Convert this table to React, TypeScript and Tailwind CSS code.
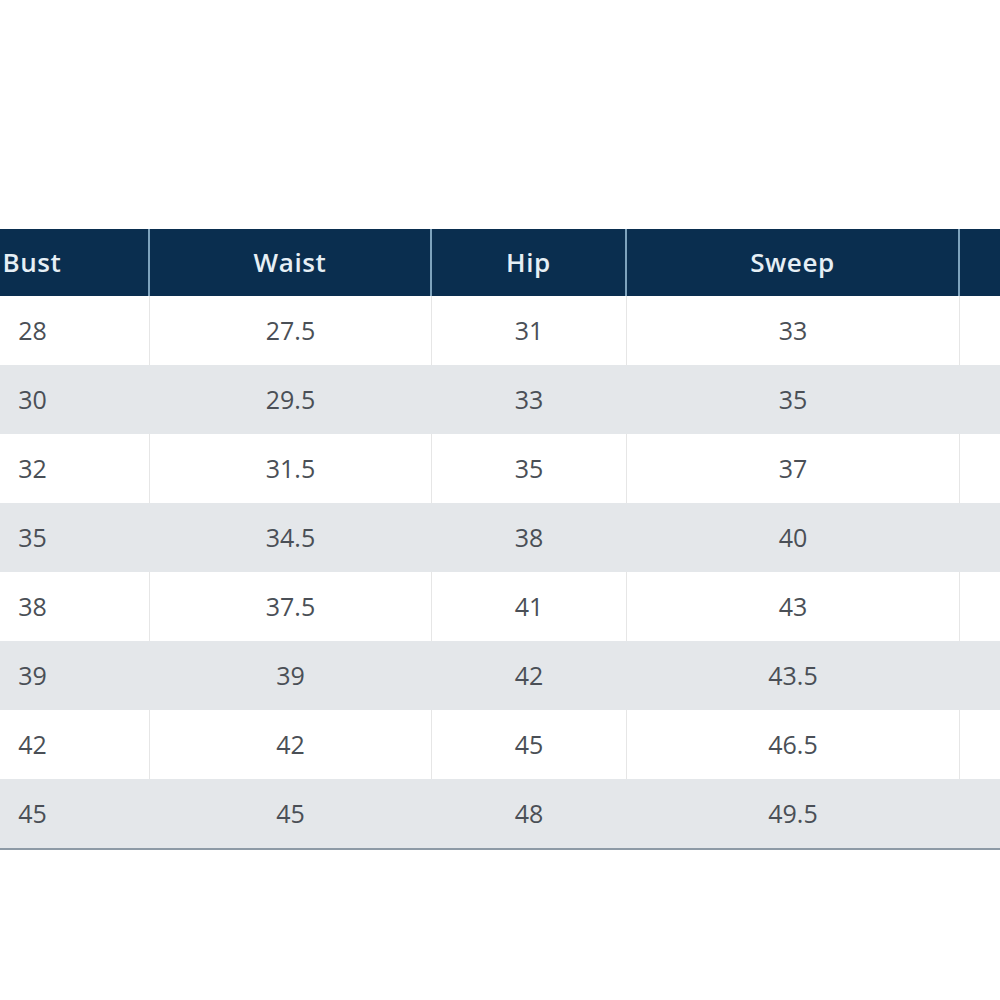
import React from "react";

const rows = [
  ["28", "27.5", "31", "33"],
  ["30", "29.5", "33", "35"],
  ["32", "31.5", "35", "37"],
  ["35", "34.5", "38", "40"],
  ["38", "37.5", "41", "43"],
  ["39", "39", "42", "43.5"],
  ["42", "42", "45", "46.5"],
  ["45", "45", "48", "49.5"],
];

const widths = ["w-[234px]", "w-[282px]", "w-[195px]", "w-[333px]", "w-[200px]"];

export default function App() {
  return (
    <div className="w-[1000px] h-[1000px] bg-white overflow-hidden" style={{ fontFamily: '"Open Sans", "Liberation Sans", sans-serif' }}>
      <div className="pt-[229px] ml-[-84px] w-[1244px]">
        <div className="flex h-[67px] bg-[#0a2e4f]">
          {["Bust", "Waist", "Hip", "Sweep", ""].map((h, i) => (
            <div
              key={i}
              className={`${widths[i]} flex items-center justify-center text-[26px] font-semibold tracking-[0.6px] text-[#e6eff5] ${i < 4 ? "border-r-2 border-[#7ea3bd]" : ""}`}
            >
              {h}
            </div>
          ))}
        </div>
        {rows.map((r, ri) => (
          <div key={ri} className={`flex h-[69px] ${ri % 2 === 1 ? "bg-[#e4e7ea]" : "bg-white"}`}>
            {[...r, ""].map((c, ci) => (
              <div
                key={ci}
                className={`${widths[ci]} flex items-center justify-center text-[25px] text-[#4a4f56] ${ci < 4 && ri % 2 === 0 ? "border-r border-[#e6e6e6]" : ci < 4 ? "border-r border-transparent" : ""}`}
              >
                {c}
              </div>
            ))}
          </div>
        ))}
        <div className="h-[2px] bg-[#8d9aa6]" />
      </div>
    </div>
  );
}
